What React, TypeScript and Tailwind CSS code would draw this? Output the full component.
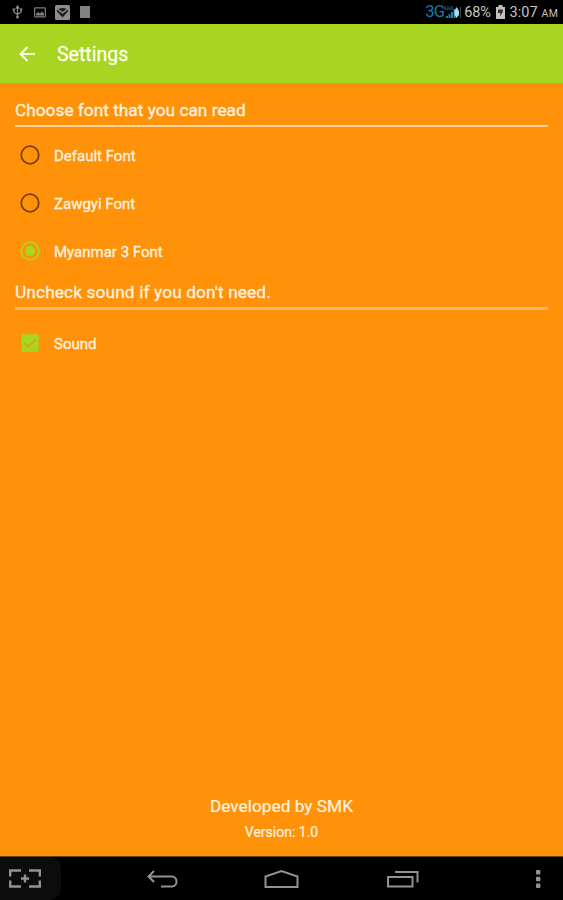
import { useState } from 'react';
import type { ReactNode } from 'react';

const FONTS = ['Default Font', 'Zawgyi Font', 'Myanmar 3 Font'];

export default function App() {
  const [font, setFont] = useState('Myanmar 3 Font');
  const [sound, setSound] = useState(true);

  return (
    <div className="flex h-[900px] w-[563px] flex-col overflow-hidden bg-[#ff9208] font-['Roboto',sans-serif] text-[#fff3e0]">
      <StatusBar />
      <header className="flex h-[59px] shrink-0 items-center bg-[#a8d522] pl-[19px] text-[#fbffe9]">
        <button aria-label="Back">
          <svg className="block" width="17" height="16" viewBox="0 0 17 16" fill="none" stroke="currentColor" strokeWidth="2">
            <path d="M16 8H2M8.5 1 1.6 8l6.9 7" />
          </svg>
        </button>
        <h1 className="ml-[21px] pt-[2px] text-[19.5px] leading-6 [-webkit-text-stroke:0.3px]">Settings</h1>
      </header>

      <main className="flex flex-1 flex-col px-[15px]">
        <SectionTitle className="mt-[15px] mb-[5px] h-[29px] border-b-2 border-[#ffd3a0]">Choose font that you can read</SectionTitle>
        <div className="-mt-px flex flex-col">
          {FONTS.map((name) => (
            <Option key={name} label={name} onClick={() => setFont(name)}>
              <RadioMark checked={font === name} />
            </Option>
          ))}
        </div>
        <SectionTitle className="mt-[5px] mb-[9px] h-[30px] border-b-[3px] border-[#ffb673] tracking-[0.12px]">Uncheck sound if you don't need.</SectionTitle>
        <Option label="Sound" onClick={() => setSound(!sound)}>
          <CheckMark checked={sound} />
        </Option>
        <footer className="mt-auto mb-[14px] text-center [-webkit-text-stroke:0.2px]">
          <p className="text-[17.3px] leading-6">Developed by SMK</p>
          <p className="mt-1 text-[14px] leading-5">Version: 1.0</p>
        </footer>
      </main>
      <NavBar />
    </div>
  );
}

function SectionTitle({ className, children }: { className: string; children: ReactNode }) {
  return <h2 className={`${className} shrink-0 text-[17.3px] leading-6 whitespace-nowrap [-webkit-text-stroke:0.3px]`}>{children}</h2>;
}

function Option({ label, onClick, children }: { label: string; onClick: () => void; children: ReactNode }) {
  return (
    <button className="flex h-12 w-full shrink-0 items-center pl-[5px] text-left" onClick={onClick}>
      {children}
      <span className="ml-[14px] pt-[2px] text-[15px] leading-5 [-webkit-text-stroke:0.3px]">{label}</span>
    </button>
  );
}

function RadioMark({ checked }: { checked: boolean }) {
  return (
    <svg className={checked ? 'text-[#aed321]' : 'text-[#754306]'} width="20" height="20" viewBox="0 0 20 20" fill="none">
      <circle cx="10" cy="10" r="8.8" stroke="currentColor" strokeWidth="1.8" />
      {checked && <circle cx="10" cy="10" r="5" fill="#a4d823" />}
    </svg>
  );
}

function CheckMark({ checked }: { checked: boolean }) {
  return (
    <svg width="20" height="20" viewBox="0 0 20 20" fill="none">
      <rect x="1.3" y="1.3" width="17.4" height="17.4" rx="1.5" fill={checked ? '#a8d522' : 'none'} stroke={checked ? 'none' : '#754306'} />
      {checked && <path d="m4.5 10 3.8 3.7 7.3-7.2" stroke="#e3a411" strokeWidth="1.9" />}
    </svg>
  );
}

function StatusBar() {
  return (
    <div className="flex h-6 shrink-0 items-center bg-black text-[#c4c4c4]">
      <svg className="ml-3 text-[#858585]" width="11" height="14" viewBox="0 0 11 14" fill="none" stroke="currentColor" strokeWidth="1.3">
        <path d="M5.5 2v11M1.8 4v3l3.7 2.5M9.2 4v3L5.5 9.5" />
        <path d="M4.2 3 5.5 1 6.8 3z" fill="currentColor" />
        <circle cx="1.8" cy="4.5" r="1.2" fill="currentColor" stroke="none" />
        <path d="M8.1 3.4h2.2v2.2H8.1z" fill="currentColor" stroke="none" />
        <circle cx="5.5" cy="12" r="1.5" fill="currentColor" stroke="none" />
      </svg>
      <svg className="ml-[11px] text-[#808080]" width="12" height="11" viewBox="0 0 12 11" fill="none">
        <rect x=".6" y=".9" width="10.8" height="9" rx=".8" stroke="currentColor" strokeWidth="1.2" />
        <path d="M2 8.5V7l2-2 2 1.5L8 4.5l2 2.2v1.8z" fill="currentColor" />
      </svg>
      <svg className="ml-[9px]" width="15" height="15" viewBox="0 0 15 15" fill="none">
        <rect width="15" height="15" rx="1.5" fill="#8e8e8e" />
        <path d="M1.5 6c2-4 10-4 12 0l-6 6.5z" fill="#202020" />
        <path d="m3 4.5 4.5 3.3L12 4.5" stroke="#8e8e8e" strokeWidth="1.4" />
      </svg>
      <span className="ml-[10px] h-3 w-[10px] bg-[#828282]" />

      <div className="mr-[5px] ml-auto flex items-center text-[14.5px] leading-6">
        <span className="text-[16.5px] tracking-[-0.7px] text-[#1779a8]">3G</span>
        <svg className="-ml-px" width="19" height="16" viewBox="0 0 19 16">
          <path d="M1 3h2M4 3h2M7 3h3M1 5h9" stroke="#126f99" strokeWidth="1.2" />
          <path d="M3 14v-2h2v2zM5.5 14v-4h2v4zM8 14V8h2v6zM10.5 14V5h2v9z" fill="#1583b2" />
          <path d="m13.5 3 2.5 4v4l-2.5 3-2-3V7z" fill="#b9d6e3" />
          <path d="M17.5 3v11" stroke="#484848" />
        </svg>
        <span className="ml-[2px] pt-[2px] tracking-[-0.2px]">68%</span>
        <svg className="ml-[4px]" width="11" height="14" viewBox="0 0 11 14">
          <path d="M3.5 0h4v2H10v12H1V2h2.5z" fill="#c1c1c1" />
          <path d="M3 4.5h4.8V7L4.8 11.5 5.4 8H3z" fill="#303030" />
        </svg>
        <span className="ml-[4px] pt-[2px]">3:07</span>
        <span className="ml-[4px] pt-[4px] text-[10.5px] tracking-[0.2px]">AM</span>
      </div>
    </div>
  );
}

function NavBar() {
  return (
    <nav className="flex h-11 shrink-0 items-center border-t border-[#6a4108] bg-black text-[#929292]">
      <button className="h-full w-[61px] rounded-r-xl bg-[#0c0c0c] pl-[9px]" aria-label="Screenshot">
        <svg width="32" height="19" viewBox="0 0 32 19" fill="none" stroke="currentColor" strokeWidth="2.4">
          <path d="M1.2 7.5V1.5H12M20 1.5h10.8v6M1.2 11.5v6H12M20 17.5h10.8v-6M16 5.5v8M12 9.5h8" />
        </svg>
      </button>
      <button className="ml-[86px]" aria-label="Back">
        <svg width="31" height="18" viewBox="0 0 31 18" fill="none" stroke="currentColor" strokeWidth="2">
          <path d="M7 1 1.5 6.5 7 12M2 6.5h23a4.5 5 0 0 1 0 10H14" />
        </svg>
      </button>
      <button className="ml-[86px]" aria-label="Home">
        <svg width="35" height="20" viewBox="0 0 35 20" fill="none" stroke="currentColor" strokeWidth="2">
          <path d="M1.5 18V7.5L17.5 2l16 5.5V18z" />
        </svg>
      </button>
      <button className="ml-[87px]" aria-label="Recent apps">
        <svg width="33" height="18" viewBox="0 0 33 18" fill="none" stroke="currentColor" strokeWidth="2">
          <path d="M2 7h24.5v9.5H2zM9 2h22.5v10.5" />
        </svg>
      </button>
      <button className="mr-[22px] ml-auto" aria-label="Menu">
        <svg width="5" height="18" viewBox="0 0 5 18" fill="currentColor">
          <rect width="4.4" height="4.4" rx="1" />
          <rect y="6.8" width="4.4" height="4.4" rx="1" />
          <rect y="13.6" width="4.4" height="4.4" rx="1" />
        </svg>
      </button>
    </nav>
  );
}
